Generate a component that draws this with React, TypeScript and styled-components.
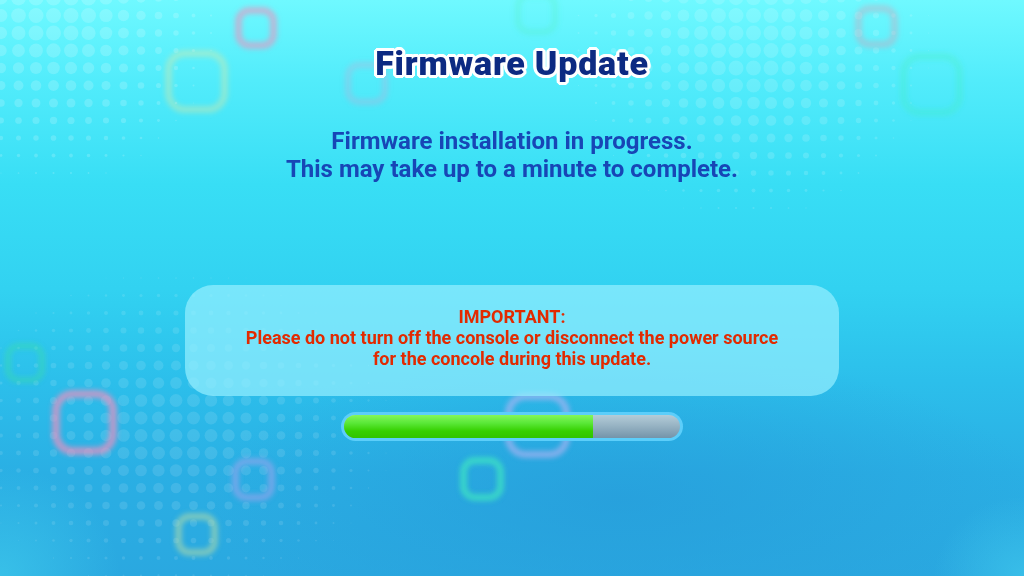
import React from 'react'
import styled, { createGlobalStyle } from 'styled-components'

type DotField = { cx: number; cy: number; rx: number; ry: number; rMax: number; alpha: number }
type Tile = { x: number; y: number; size: number; stroke: number; color: string; opacity: number }

const PITCH = 17.5

const dotFields: DotField[] = [
  { cx: 55, cy: 5, rx: 175, ry: 190, rMax: 7.5, alpha: 0.17 },
  { cx: 750, cy: 40, rx: 190, ry: 190, rMax: 7.5, alpha: 0.14 },
  { cx: 175, cy: 430, rx: 230, ry: 170, rMax: 6.5, alpha: 0.11 },
]

const tiles: Tile[] = [
  { x: 235, y: 7, size: 42, stroke: 7, color: '#ee92c0', opacity: 0.6 },
  { x: 165, y: 50, size: 63, stroke: 7, color: '#e4e8a0', opacity: 0.4 },
  { x: 345, y: 62, size: 43, stroke: 6, color: '#d8a0d0', opacity: 0.3 },
  { x: 515, y: -8, size: 43, stroke: 6, color: '#50f0b0', opacity: 0.25 },
  { x: 855, y: 5, size: 43, stroke: 7, color: '#d8a0b8', opacity: 0.4 },
  { x: 900, y: 53, size: 63, stroke: 7, color: '#40f0a0', opacity: 0.22 },
  { x: 5, y: 343, size: 40, stroke: 6, color: '#40e890', opacity: 0.35 },
  { x: 52, y: 390, size: 65, stroke: 8, color: '#ee90c0', opacity: 0.7 },
  { x: 232, y: 458, size: 43, stroke: 7, color: '#b4a4f0', opacity: 0.5 },
  { x: 175, y: 513, size: 43, stroke: 7, color: '#c8e4a0', opacity: 0.5 },
  { x: 505, y: 393, size: 65, stroke: 7, color: '#bcb4f4', opacity: 0.6 },
  { x: 460, y: 457, size: 44, stroke: 7, color: '#40e8c0', opacity: 0.7 },
]

const GlobalStyle = createGlobalStyle`
  html, body {
    margin: 0;
    padding: 0;
    background: #2cc4ee;
  }
  body {
    font-family: Roboto, 'Liberation Sans', sans-serif;
  }
`

const Backdrop = () => {
  const dots = React.useMemo(() => {
    const list: { x: number; y: number; r: number; a: number }[] = []
    for (let gy = 0; gy * PITCH < 590; gy++) {
      for (let gx = 0; gx * PITCH < 1040; gx++) {
        const x = 1 + gx * PITCH
        const y = -2 + gy * PITCH
        let best = 0
        let alpha = 0
        dotFields.forEach((f) => {
          const d = Math.hypot((x - f.cx) / f.rx, (y - f.cy) / f.ry)
          const k = Math.max(0, Math.min(1, (1 - d) / 0.8))
          const r = f.rMax * k
          if (r > best) {
            best = r
            alpha = f.alpha
          }
        })
        if (best > 0.4) list.push({ x, y, r: best, a: alpha })
      }
    }
    return list
  }, [])

  return (
    <Art width='1024' height='576' viewBox='0 0 1024 576'>
      <defs>
        <filter id='soft' x='-20%' y='-20%' width='140%' height='140%'>
          <feGaussianBlur stdDeviation='2.4' />
        </filter>
      </defs>
      {dots.map((d, i) => (
        <circle key={i} cx={d.x} cy={d.y} r={d.r} fill='#ffffff' fillOpacity={d.a} />
      ))}
      <g filter='url(#soft)'>
        {tiles.map((t, i) => (
          <rect
            key={i}
            x={t.x + t.stroke / 2}
            y={t.y + t.stroke / 2}
            width={t.size - t.stroke}
            height={t.size - t.stroke}
            rx={t.size * 0.26}
            fill='none'
            stroke={t.color}
            strokeWidth={t.stroke}
            opacity={t.opacity}
          />
        ))}
      </g>
    </Art>
  )
}

export default function App() {
  const progress = 0.74

  return (
    <>
      <GlobalStyle />
      <Screen>
        <Backdrop />
        <Content>
          <Title>Firmware Update</Title>
          <Lead>
            Firmware installation in progress.
            <br />
            This may take up to a minute to complete.
          </Lead>
          <Notice>
            <NoticeText>
              IMPORTANT:
              <br />
              Please do not turn off the console or disconnect the power source
              <br />
              for the concole during this update.
            </NoticeText>
          </Notice>
          <Track>
            <Rail>
              <Fill style={{ width: `${progress * 100}%` }} />
            </Rail>
          </Track>
        </Content>
      </Screen>
    </>
  )
}

const Screen = styled.main`
  position: relative;
  width: 1024px;
  height: 576px;
  overflow: hidden;
  background:
    radial-gradient(ellipse 90px 80px at 1024px 576px, rgba(66, 204, 238, 0.6), rgba(66, 204, 238, 0) 100%),
    radial-gradient(ellipse 120px 110px at 0px 576px, rgba(62, 202, 236, 0.7), rgba(62, 202, 236, 0) 100%),
    radial-gradient(ellipse 420px 150px at 620px 500px, rgba(38, 156, 218, 0.7), rgba(38, 156, 218, 0) 100%),
    linear-gradient(180deg, #6ff9ff 0%, #52ecfb 14%, #38def5 32%, #32d2f1 50%, #2cbfeb 66%, #2aafe4 82%, #2aa8e0 100%);
`

const Art = styled.svg`
  position: absolute;
  inset: 0;
  pointer-events: none;
`

const Content = styled.div`
  position: relative;
  display: flex;
  flex-direction: column;
  align-items: center;
  padding-top: 42px;
`

const Title = styled.h1`
  margin: 0;
  font-size: 34px;
  line-height: 42px;
  font-weight: 900;
  color: #0c2a82;
  letter-spacing: 0.8px;
  text-shadow:
    3px 0 0 #fff, -3px 0 0 #fff, 0 3px 0 #fff, 0 -3px 0 #fff,
    2px 2px 0 #fff, -2px 2px 0 #fff, 2px -2px 0 #fff, -2px -2px 0 #fff,
    3px 1px 0 #fff, -3px 1px 0 #fff, 3px -1px 0 #fff, -3px -1px 0 #fff,
    1px 3px 0 #fff, -1px 3px 0 #fff, 1px -3px 0 #fff, -1px -3px 0 #fff;
`

const Lead = styled.p`
  margin: 43px 0 0;
  font-size: 24px;
  line-height: 28px;
  font-weight: 700;
  color: #1746b6;
  text-align: center;
`

const Notice = styled.section`
  box-sizing: border-box;
  margin-top: 102px;
  width: 654px;
  height: 111px;
  padding-top: 21px;
  border-radius: 28px;
  background: rgba(150, 240, 255, 0.7);
  display: flex;
  justify-content: center;
`

const NoticeText = styled.p`
  margin: 0;
  font-size: 18px;
  line-height: 21px;
  font-weight: 700;
  color: #e22a00;
  text-align: center;
`

const Track = styled.div`
  box-sizing: border-box;
  margin-top: 16px;
  width: 342px;
  height: 29px;
  padding: 3px;
  border-radius: 15px;
  background: #5ccefa;
`

const Rail = styled.div`
  height: 100%;
  border-radius: 12px;
  overflow: hidden;
  background: linear-gradient(180deg, #b4ccd8 0%, #98b4c4 45%, #7494aa 100%);
`

const Fill = styled.div`
  height: 100%;
  background: linear-gradient(180deg, #84f65a 0%, #5ae838 35%, #36d000 70%, #30c400 100%);
`
